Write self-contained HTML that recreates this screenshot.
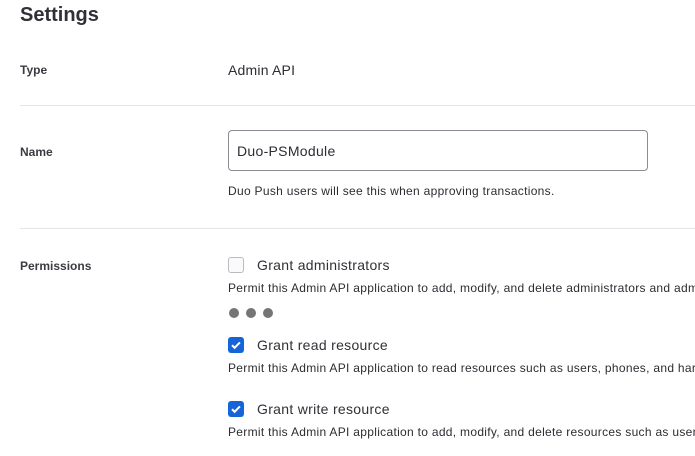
<!DOCTYPE html>
<html><head><style>
html,body{margin:0;width:695px;height:456px;overflow:hidden}
body{background:#fff;font-family:"Liberation Sans",sans-serif;color:#2b2d33;position:relative}
.a{position:absolute;white-space:nowrap}
h1{position:absolute;left:20px;top:4px;margin:0;font-size:20px;font-weight:bold;color:#2f3136}
.lbl{font-size:12px;font-weight:bold;color:#3a3c42}
.hr{position:absolute;left:20px;right:0;height:1px;background:#e4e6ea}
.sm{font-size:12px;letter-spacing:0.3px;color:#2b2d33}
.opt{font-size:14px;letter-spacing:0.3px;color:#2f3136}
.cb{position:absolute;left:228px;width:16px;height:16px;border-radius:3px;box-sizing:border-box}
.dot{position:absolute;width:10px;height:10px;border-radius:50%;background:#757575;top:308px}
</style></head><body>
<h1>Settings</h1>
<div class="a lbl" style="left:20px;top:63px">Type</div>
<div class="a" style="left:228px;top:62px;font-size:14px;letter-spacing:0.2px">Admin API</div>
<div class="hr" style="top:105px"></div>
<div class="a lbl" style="left:20px;top:145px">Name</div>
<div class="a" style="left:228px;top:130px;width:420px;height:41px;border:1px solid #8a8d94;border-radius:4px;box-sizing:border-box"></div>
<div class="a" style="left:237px;top:143px;font-size:14px;letter-spacing:0.3px">Duo-PSModule</div>
<div class="a sm" style="left:228px;top:184px">Duo Push users will see this when approving transactions.</div>
<div class="hr" style="top:228px"></div>
<div class="a lbl" style="left:20px;top:259px">Permissions</div>
<div class="cb" style="top:257px;border:1px solid #b8bbc2;background:#fafafb"></div>
<div class="a opt" style="left:257px;top:257px">Grant administrators</div>
<div class="a sm" style="left:228px;top:281px">Permit this Admin API application to add, modify, and delete administrators and administrative units.</div>
<div class="dot" style="left:229px"></div><div class="dot" style="left:246px"></div><div class="dot" style="left:263px"></div>
<div class="cb" style="top:337px;background:#1565d8"><svg width="16" height="16" viewBox="0 0 16 16"><path d="M4 8.2l2.6 2.6 5.3-5.4" fill="none" stroke="#fff" stroke-width="2"/></svg></div>
<div class="a opt" style="left:257px;top:337px">Grant read resource</div>
<div class="a sm" style="left:228px;top:361px">Permit this Admin API application to read resources such as users, phones, and hardware tokens.</div>
<div class="cb" style="top:401px;background:#1565d8"><svg width="16" height="16" viewBox="0 0 16 16"><path d="M4 8.2l2.6 2.6 5.3-5.4" fill="none" stroke="#fff" stroke-width="2"/></svg></div>
<div class="a opt" style="left:257px;top:401px">Grant write resource</div>
<div class="a sm" style="left:228px;top:425px">Permit this Admin API application to add, modify, and delete resources such as users, phones, and hardware tokens.</div>
</body></html>
